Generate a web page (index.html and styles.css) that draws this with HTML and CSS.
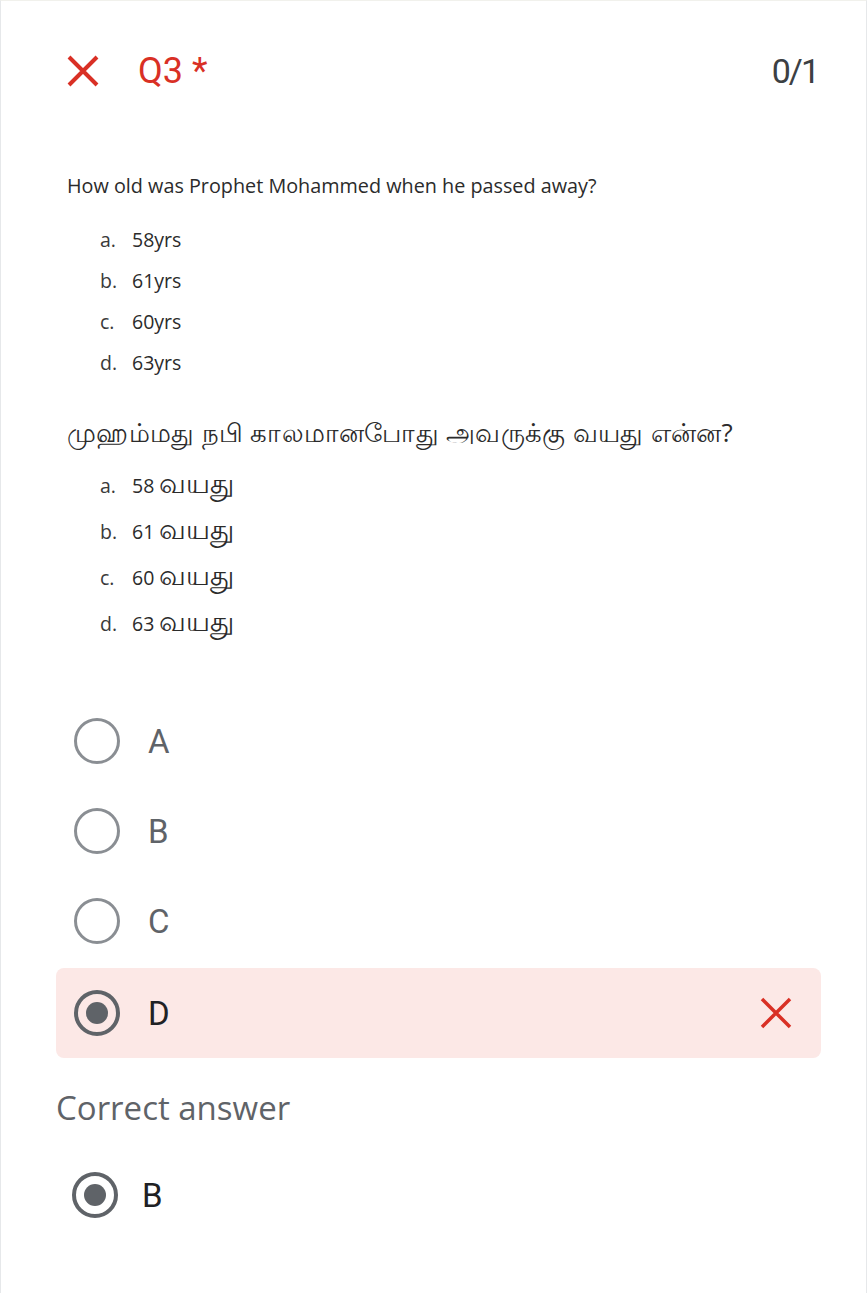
FILE: index.html
```html
<!DOCTYPE html>
<html lang="en">
<head>
<meta charset="utf-8">
<title>Q3</title>
<link rel="stylesheet" href="styles.css">
</head>
<body>
<div class="card">
  <div class="header">
    <div class="title">
      <svg class="x-icon" width="34" height="32" viewBox="0 0 34 32" aria-hidden="true">
        <path d="M3 2 L31 30 M31 2 L3 30" stroke="#d93025" stroke-width="4" fill="none"/>
      </svg>
      <span class="qnum">Q3 *</span>
    </div>
    <span class="score">0/1</span>
  </div>

  <div class="prompt">
    <p class="q-en">How old was Prophet Mohammed when he passed away?</p>
    <ol class="opts opts-en">
      <li><span class="lbl">a.</span><span>58yrs</span></li>
      <li><span class="lbl">b.</span><span>61yrs</span></li>
      <li><span class="lbl">c.</span><span>60yrs</span></li>
      <li><span class="lbl">d.</span><span>63yrs</span></li>
    </ol>
    <p class="q-ta">முஹம்மது நபி காலமானபோது அவருக்கு வயது என்ன?</p>
    <ol class="opts opts-ta">
      <li><span class="lbl">a.</span><span class="num">58</span><span class="ta">வயது</span></li>
      <li><span class="lbl">b.</span><span class="num">61</span><span class="ta">வயது</span></li>
      <li><span class="lbl">c.</span><span class="num">60</span><span class="ta">வயது</span></li>
      <li><span class="lbl">d.</span><span class="num">63</span><span class="ta">வயது</span></li>
    </ol>
  </div>

  <div class="choices">
    <div class="choice"><span class="radio"></span><span class="choice-label">A</span></div>
    <div class="choice"><span class="radio"></span><span class="choice-label">B</span></div>
    <div class="choice"><span class="radio"></span><span class="choice-label">C</span></div>
    <div class="choice wrong">
      <span class="radio checked"></span><span class="choice-label dark">D</span>
      <svg class="x-small" width="34" height="32" viewBox="0 0 34 32" aria-hidden="true">
        <path d="M3 2 L31 30 M31 2 L3 30" stroke="#d93025" stroke-width="3.5" fill="none"/>
      </svg>
    </div>
  </div>

  <div class="correct">
    <div class="correct-title">Correct answer</div>
    <div class="choice answer"><span class="radio checked"></span><span class="choice-label dark">B</span></div>
  </div>
</div>
</body>
</html>
```

FILE: styles.css
```css
html, body {
  margin: 0;
  padding: 0;
  background: #ffffff;
}

.card {
  box-sizing: border-box;
  width: 867px;
  min-height: 1293px;
  border-left: 1px solid #e6e8ea;
  border-right: 1px solid #e6e8ea;
  border-top: 1px solid #f1f1ec;
  font-family: Roboto, "Liberation Sans", sans-serif;
}

.header {
  display: flex;
  align-items: center;
  justify-content: space-between;
  height: 42px;
  padding: 49px 48px 0 65px;
}

.title {
  display: flex;
  align-items: center;
  gap: 38px;
}

.x-icon {
  display: block;
}

.qnum {
  font-size: 36px;
  color: #d93025;
  line-height: 42px;
}

.score {
  font-size: 34px;
  letter-spacing: -2px;
  color: #3c4043;
  line-height: 42px;
}

.prompt {
  padding-left: 66px;
  font-family: "Open Sans", Lato, sans-serif;
  color: #2b2b2b;
}

.q-en {
  margin: 79px 0 0 0;
  font-size: 19.8px;
  line-height: 30px;
}

.opts {
  list-style: none;
  margin: 0;
  padding: 0 0 0 33px;
}

.opts li {
  display: flex;
  align-items: baseline;
  font-size: 19.5px;
}

.opts .lbl {
  width: 32px;
  color: #3a3a3a;
}

.opts-en {
  margin-top: 18px;
}

.opts-en li {
  height: 41px;
  line-height: 41px;
}

.q-ta {
  margin: 31px 0 0 0;
  font-size: 26px;
  letter-spacing: 0.3px;
  line-height: 36px;
}

.opts-ta {
  margin-top: 9px;
}

.opts-ta li {
  height: 46px;
  line-height: 46px;
}

.opts-ta .num {
  margin-right: 5px;
}

.ta {
  font-size: 28px;
  line-height: 46px;
}

.choices {
  margin-top: 53px;
  padding: 0 45px 0 55px;
}

.choice {
  display: flex;
  align-items: center;
  height: 90px;
  padding-left: 18px;
}

.radio {
  box-sizing: border-box;
  width: 46px;
  height: 46px;
  border-radius: 50%;
  border: 3.5px solid #8a8e93;
  display: flex;
  align-items: center;
  justify-content: center;
  flex: none;
}

.radio.checked {
  border: 4px solid #5f6368;
}

.radio.checked::after {
  content: "";
  width: 22px;
  height: 22px;
  border-radius: 50%;
  background: #5f6368;
}

.choice-label {
  margin-left: 28px;
  font-size: 33px;
  color: #5f6368;
}

.choice-label.dark {
  color: #202124;
}

.choice.wrong {
  margin-top: 2px;
  background: #fce8e6;
  border-radius: 8px;
}

.x-small {
  margin-left: auto;
  margin-right: 28px;
}

.correct {
  padding-left: 55px;
}

.correct-title {
  margin-top: 30px;
  font-family: "Open Sans", Roboto, sans-serif;
  font-size: 33px;
  line-height: 40px;
  color: #5f6368;
}

.choice.answer {
  margin-top: 22px;
  padding-left: 16px;
}

.choice.answer .choice-label {
  margin-left: 24px;
}
```
